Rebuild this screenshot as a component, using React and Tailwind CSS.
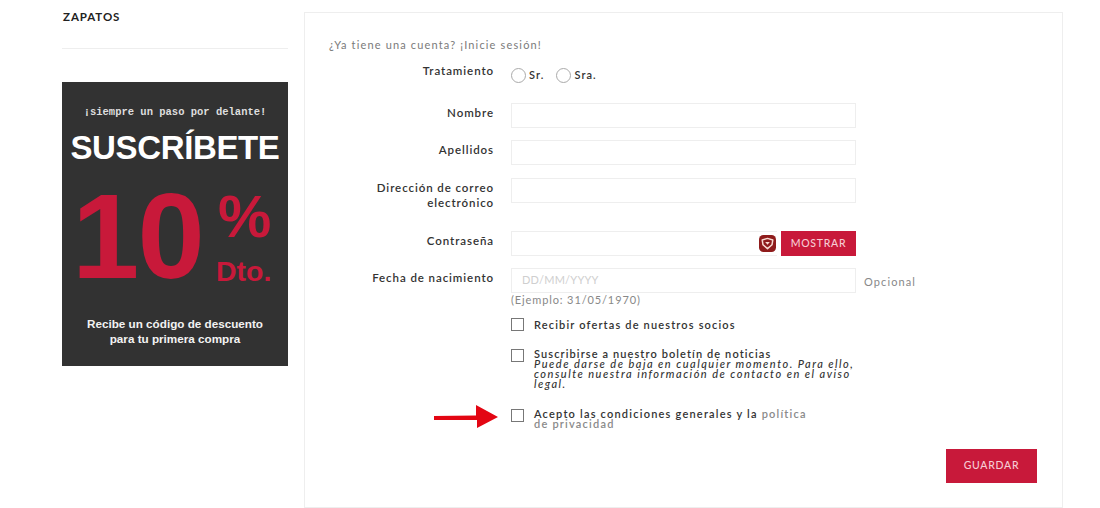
import React from "react";

const Field = ({ label, children, className = "" }) => {
  return (
    <div className={`flex ${className}`}>
      <label className="w-[165px] shrink-0 text-right text-[11.5px] leading-[15px] font-semibold tracking-[0.08em] text-[#333]">
        {label}
      </label>
      <div className="ml-[17px] flex items-start">{children}</div>
    </div>
  );
};

const Radio = ({ label }) => (
  <span className="flex items-center">
    <span className="h-[15px] w-[15px] rounded-full border border-[#aaa] bg-white" />
    <span className="ml-[3px] text-[11px] font-semibold tracking-[0.1em] text-[#333]">{label}</span>
  </span>
);

const Check = () => (
  <span className="mt-px h-[13px] w-[13px] shrink-0 border border-[#777] bg-white" />
);

const inputCls = "block h-[25px] w-[345px] border border-[#eeeeee] bg-white";

function Banner() {
  return (
    <div className="mt-[33px] flex h-[284px] flex-col items-center bg-[#323232] font-['Liberation_Sans',sans-serif]">
      <div className="mt-[23px] font-['Liberation_Mono',monospace] text-[10.5px] leading-[14px] font-bold text-[#dedede]">
        ¡siempre un paso por delante!
      </div>
      <div className="mt-[10px] text-[33px] leading-[38px] font-bold tracking-[-0.011em] text-white">
        SUSCRÍBETE
      </div>
      <div className="mt-[9px] flex w-full pl-[10px] text-[#c8193a]">
        <div className="text-[121px] leading-[121px] font-bold tracking-[-0.015em]">10</div>
        <div className="ml-[13px] flex flex-col items-end">
          <div className="mt-[11px] text-[60px] leading-[60px] font-bold">%</div>
          <div className="mt-[8px] text-[28.5px] leading-[32px] font-bold">Dto.</div>
        </div>
      </div>
      <div className="mt-[19px] text-center text-[11.7px] leading-[15px] font-bold text-[#f2f2f2]">
        Recibe un código de descuento
        <br />
        para tu primera compra
      </div>
    </div>
  );
}

export default function App() {
  return (
    <div className="flex h-[508px] items-start overflow-hidden bg-white pl-[62px] font-['Lato',sans-serif]">
      {/* columna izquierda */}
      <aside className="w-[226px] shrink-0">
        <div className="border-b border-[#eeeeee] pt-[9px] pb-[24px] pl-px text-[11.5px] leading-[15px] font-bold tracking-[0.08em] text-[#222]">
          ZAPATOS
        </div>
        <Banner />
      </aside>

      <main className="mt-[12px] ml-[16px] h-[496px] w-[759px] shrink-0 border border-[#eeeeee] pt-[24px] pl-[24px]">
        <p className="text-[11px] leading-[15px] tracking-[0.105em] text-[#7a7a7a]">
          ¿Ya tiene una cuenta? ¡Inicie sesión!
        </p>

        <Field label="Tratamiento" className="mt-[11px]">
          <div className="mt-[4px] flex gap-[12px]">
            <Radio label="Sr." />
            <Radio label="Sra." />
          </div>
        </Field>

        <Field label="Nombre" className="mt-[19px] [&>label]:pt-[2px]">
          <div className={inputCls} />
        </Field>

        <Field label="Apellidos" className="mt-[12px] [&>label]:pt-[2px]">
          <div className={inputCls} />
        </Field>

        <Field label="Dirección de correo electrónico" className="mt-[13px] [&>label]:pt-[2px]">
          <div className={inputCls} />
        </Field>

        <Field label="Contraseña" className="mt-[21px] [&>label]:pt-[2px]">
          <div className="flex h-[25px] w-[345px]">
            <div className="flex flex-1 items-center justify-end border border-r-0 border-[#eeeeee] pr-[1px]">
              <svg width="17" height="17" viewBox="0 0 17 17">
                <rect width="17" height="17" rx="4.5" fill="#8f1c1c" />
                <path
                  d="M3.2 5 8.5 3.4 13.8 5l-.8 4.8-4.5 3.8L4 9.8z"
                  fill="none"
                  stroke="#f8dcd4"
                  strokeWidth="1.5"
                  strokeLinejoin="round"
                />
                <path d="M6.2 7h4.6L8.5 9.8z" fill="#f8dcd4" />
              </svg>
            </div>
            <button className="ml-[4px] w-[75px] bg-[#c8193a] pt-px text-[10.5px] font-medium tracking-[0.07em] text-[#f6ccd4]">
              MOSTRAR
            </button>
          </div>
        </Field>

        <Field label="Fecha de nacimiento" className="mt-[12px] [&>label]:pt-[2px]">
          <div className="flex h-[25px] w-[345px] items-center border border-[#eeeeee] pl-[10px] text-[11px] tracking-[0.02em] text-[#cfcfcf]">
            DD/MM/YYYY
          </div>
          <span className="mt-[6px] ml-[8px] text-[11px] leading-[15px] tracking-[0.1em] text-[#888]">
            Opcional
          </span>
        </Field>

        <div className="mt-[-1px] ml-[182px] text-[11px] leading-[15px] tracking-[0.08em] text-[#888]">
          (Ejemplo: 31/05/1970)
        </div>

        <div className="mt-[10px] ml-[182px] flex">
          <Check />
          <span className="ml-[10px] text-[11px] leading-[15px] font-semibold tracking-[0.105em] text-[#333]">
            Recibir ofertas de nuestros socios
          </span>
        </div>

        <div className="mt-[16px] ml-[182px] flex">
          <Check />
          <div className="ml-[10px] w-[325px] pt-px text-[11px] leading-[10px] tracking-[0.1em] text-[#333]">
            <span className="font-semibold">Suscribirse a nuestro boletín de noticias</span>
            <br />
            <em className="font-medium tracking-[0.135em]">
              Puede darse de baja en cualquier momento. Para ello, consulte nuestra información de contacto en el aviso legal.
            </em>
          </div>
        </div>

        <div className="relative mt-[19px] ml-[182px] flex">
          <svg className="absolute top-[-3px] left-[-77px]" width="66" height="24" viewBox="0 0 66 24">
            <path d="M0 11 42 10.5V0L64 12 43 23V15H0z" fill="#e30613" />
          </svg>
          <Check />
          <div className="ml-[10px] w-[280px] pt-px text-[11px] leading-[10px] font-semibold tracking-[0.11em] text-[#333]">
            Acepto las condiciones generales y la <span className="text-[#8a8a8a]">política de privacidad</span>
          </div>
        </div>

        <div className="mt-[20px] flex justify-end pr-[25px]">
          <button className="h-[34px] w-[91px] bg-[#c8193a] pt-px text-[10.5px] font-medium tracking-[0.07em] text-[#f6ccd4]">
            GUARDAR
          </button>
        </div>
      </main>
    </div>
  );
}
